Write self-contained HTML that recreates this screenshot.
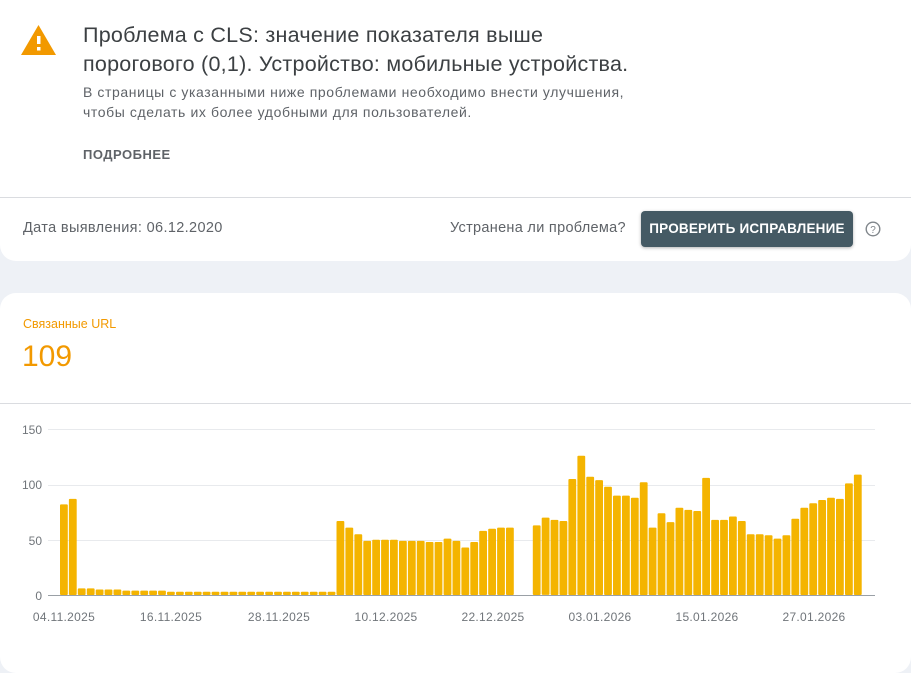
<!DOCTYPE html>
<html><head><meta charset="utf-8">
<style>
*{margin:0;padding:0;box-sizing:border-box}
body{width:911px;height:644px;background:#eef1f6;font-family:"Liberation Sans",Roboto,sans-serif;position:relative;overflow:hidden}
.card1{position:absolute;left:0;top:0;width:911px;height:261px;background:#fff;border-radius:0 0 16px 16px}
.card2{position:absolute;left:0;top:293px;width:911px;height:380px;background:#fff;border-radius:16px}
.t{position:absolute;white-space:nowrap}
</style></head><body>
<div class="card1">
  <svg class="t" style="left:20px;top:24px" width="37" height="32" viewBox="0 0 37 32"><path d="M18.5 1 L36 31 L1 31 Z" fill="#f29900"/><rect x="17" y="12" width="3.5" height="8" fill="#fff"/><rect x="17" y="23" width="3.5" height="3.5" fill="#fff"/></svg>
  <div class="t" style="left:83px;top:21px;font-size:21.5px;letter-spacing:0.25px;line-height:29px;color:#3c4043">Проблема с CLS: значение показателя выше<br>порогового (0,1). Устройство: мобильные устройства.</div>
  <div class="t" style="left:83px;top:82px;font-size:14px;letter-spacing:0.6px;line-height:20px;color:#5f6368">В страницы с указанными ниже проблемами необходимо внести улучшения,<br>чтобы сделать их более удобными для пользователей.</div>
  <div class="t" style="left:83px;top:147px;font-size:13px;font-weight:bold;letter-spacing:.5px;color:#5f6368">ПОДРОБНЕЕ</div>
  <div style="position:absolute;left:0;top:197px;width:911px;height:1px;background:#dadce0"></div>
  <div class="t" style="left:23px;top:220px;font-size:14.5px;letter-spacing:0.35px;color:#5f6368">Дата выявления: 06.12.2020</div>
  <div class="t" style="left:450px;top:220px;font-size:14.5px;letter-spacing:0.3px;color:#5f6368">Устранена ли проблема?</div>
  <div class="t" style="left:641px;top:211px;width:212px;height:36px;background:#455a64;border-radius:4px;color:#fff;font-size:13.5px;font-weight:bold;letter-spacing:.2px;text-align:center;line-height:36px;box-shadow:0 1px 3px rgba(0,0,0,.3)">ПРОВЕРИТЬ ИСПРАВЛЕНИЕ</div>
  <svg class="t" style="left:865px;top:221px" width="16" height="16" viewBox="0 0 16 16"><circle cx="8" cy="8" r="6.8" fill="none" stroke="#80868b" stroke-width="1.4"/><text x="8" y="12" font-size="10" text-anchor="middle" fill="#80868b" font-family="Liberation Sans">?</text></svg>
</div>
<div class="card2">
  <div class="t" style="left:23px;top:24px;font-size:12.5px;color:#f29900">Связанные URL</div>
  <div class="t" style="left:22px;top:47px;font-size:30px;color:#f29900">109</div>
  <div style="position:absolute;left:0;top:110px;width:911px;height:1px;background:#dadce0"></div>
</div>
<svg id="ch" style="position:absolute;left:0;top:0" width="911" height="644" font-family="Liberation Sans" font-size="12" fill="#70757a">
  <line x1="48" y1="429.5" x2="875" y2="429.5" stroke="#e8eaed"/>
  <line x1="48" y1="485.5" x2="875" y2="485.5" stroke="#e8eaed"/>
  <line x1="48" y1="540.5" x2="875" y2="540.5" stroke="#e8eaed"/>
  <text x="42" y="434" text-anchor="end">150</text>
  <text x="42" y="489" text-anchor="end">100</text>
  <text x="42" y="545" text-anchor="end">50</text>
  <text x="42" y="600" text-anchor="end">0</text>
  <g id="bars" fill="#f4b400"></g>
  <line x1="48" y1="595.5" x2="875" y2="595.5" stroke="#9aa0a6"/>
  <g letter-spacing="0.3">
  <text x="64" y="621" text-anchor="middle">04.11.2025</text>
  <text x="171" y="621" text-anchor="middle">16.11.2025</text>
  <text x="279" y="621" text-anchor="middle">28.11.2025</text>
  <text x="386" y="621" text-anchor="middle">10.12.2025</text>
  <text x="493" y="621" text-anchor="middle">22.12.2025</text>
  <text x="600" y="621" text-anchor="middle">03.01.2026</text>
  <text x="707" y="621" text-anchor="middle">15.01.2026</text>
  <text x="814" y="621" text-anchor="middle">27.01.2026</text>
  </g>
</svg>
<script>
var v=[82,87,6,6,5,5,5,4,4,4,4,4,3,3,3,3,3,3,3,3,3,3,3,3,3,3,3,3,3,3,3,67,61,55,49,50,50,50,49,49,49,48,48,51,49,43,48,58,60,61,61,0,0,63,70,68,67,105,126,107,104,98,90,90,88,102,61,74,66,79,77,76,106,68,68,71,67,55,55,54,51,54,69,79,83,86,88,87,101,109];
var g=document.getElementById('bars'),s='';
for(var i=0;i<v.length;i++){if(!v[i])continue;var h=v[i]*1.105;var x=60+i*8.92;
s+='<rect x="'+x.toFixed(1)+'" y="'+(595-h).toFixed(1)+'" width="7.8" height="'+h.toFixed(1)+'" rx="1"/>';}
g.innerHTML=s;
</script>
</body></html>
